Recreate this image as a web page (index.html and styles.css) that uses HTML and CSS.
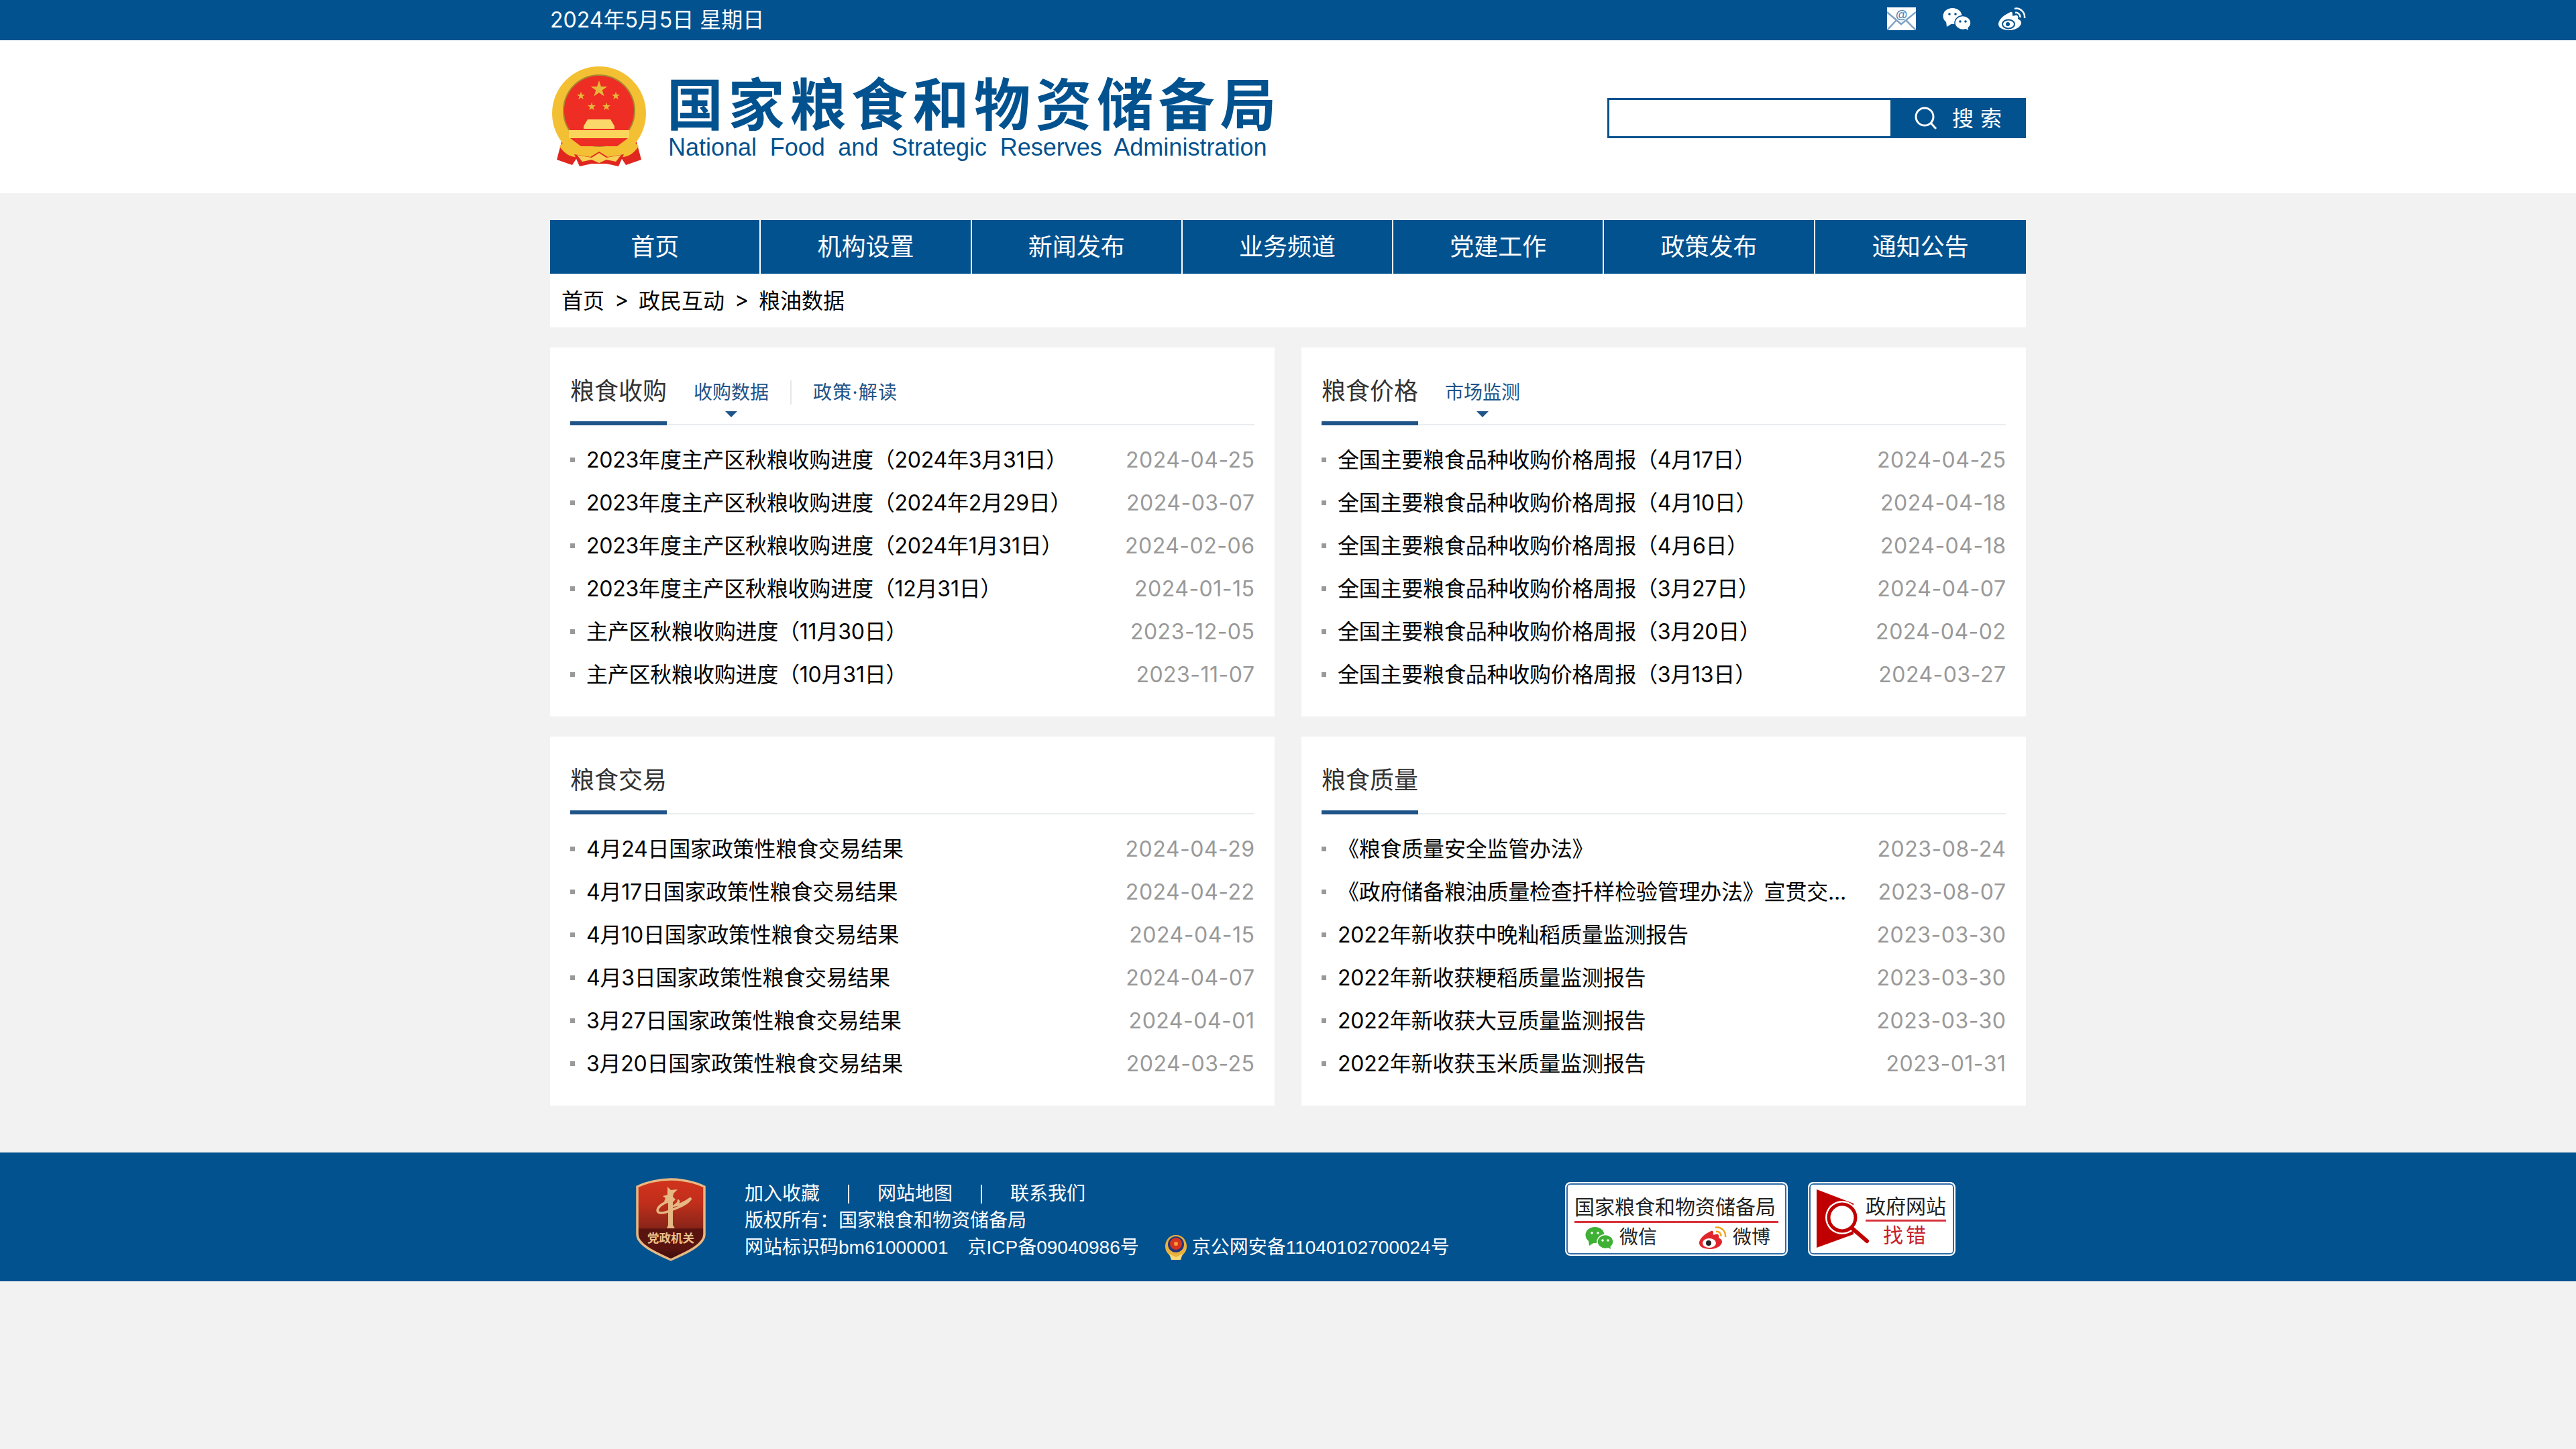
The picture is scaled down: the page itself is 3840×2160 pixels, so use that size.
FILE: index.html
```html
<!DOCTYPE html>
<html lang="zh-CN">
<head>
  <meta charset="UTF-8">
  <meta name="viewport" content="width=device-width, initial-scale=1.0">
  <title>粮油数据 - 国家粮食和物资储备局</title>
  <link rel="stylesheet" href="styles.css">
</head>
<body>
  <!-- Top bar -->
  <div class="topbar">
    <div class="wrap topbar-inner">
      <span class="today">2024年5月5日 星期日</span>
      <div class="top-icons">
        <svg class="icon-mail" viewBox="0 0 43 34">
          <rect width="43" height="34" fill="#fff"/>
          <path d="M0 7 L21 25 L43 7 M0 34 L14 19 M43 34 L28 19" fill="none" stroke="#7fa3c6" stroke-width="2.5"/>
          <circle cx="21.500" cy="11" r="9" fill="#fff"/>
          <text x="21.5" y="17" text-anchor="middle" class="mail-at">@</text>
        </svg>
        <svg class="icon-social" viewBox="0 0 42 34">
          <ellipse cx="14.500" cy="13" rx="14" ry="12" fill="#fff"/>
          <path d="M5 21 L6 29 L14 24 Z" fill="#fff"/>
          <ellipse cx="30" cy="23" rx="12" ry="10.500" fill="#fff" stroke="#02528f" stroke-width="1.500"/>
          <path d="M33 31 L38 34 L37 27 Z" fill="#fff"/>
          <circle cx="10" cy="10" r="1.800" fill="#02528f"/>
          <circle cx="19" cy="10" r="1.800" fill="#02528f"/>
          <circle cx="26" cy="21" r="1.800" fill="#02528f"/>
          <circle cx="34" cy="21" r="1.800" fill="#02528f"/>
        </svg>
        <svg class="icon-social" viewBox="0 0 42 34">
          <path d="M17 8 C8 12 1 19 1 25 C1 31 9 34 17 34 C28 34 35 28 35 23 C35 19 31 18 30 17 C31 14 30 11 26 12 C22 13 21 13 22 10 C22 6 20 6 17 8 Z" fill="#fff"/>
          <ellipse cx="16" cy="25" rx="9" ry="6.5" fill="none" stroke="#02528f" stroke-width="2"/>
          <circle cx="15" cy="25" r="3" fill="#02528f"/>
          <path d="M25 2 C33 0 41 7 40 16 M26 8 C30 7 34 11 33.500 15" fill="none" stroke="#fff" stroke-width="2.500"/>
        </svg>
      </div>
    </div>
  </div>

  <!-- Logo and search -->
  <header class="header">
    <div class="wrap header-inner">
      <div class="logo">
        <svg class="emblem" viewBox="0 0 144 152">
          <defs>
            <polygon id="star" points="0,-1 .225,-.309 .951,-.309 .363,.118 .588,.809 0,.382 -.588,.809 -.363,.118 -.951,-.309 -.225,-.309"/>
          </defs>
          <path d="M18 110 L10 140 L33 148 L48 125 Z M128 110 L136 140 L113 148 L98 125 Z" fill="#e0261f"/>
          <circle cx="73" cy="71" r="70" fill="#f4c033"/>
          <circle cx="73" cy="67" r="54" fill="#a8862e"/>
          <circle cx="73" cy="67" r="52" fill="#ee2d24"/>
          <g fill="#e7b93a">
            <use href="#star" transform="translate(73 35) scale(13)"/>
            <use href="#star" transform="translate(46 45) scale(6.500)"/>
            <use href="#star" transform="translate(98 45) scale(6.500)"/>
            <use href="#star" transform="translate(62 61) scale(6.500)"/>
            <use href="#star" transform="translate(84 61) scale(6.500)"/>
          </g>
          <path d="M56 80 H90 L96 90 V94 H50 V90 Z" fill="#fbd86a"/>
          <rect x="28" y="96" width="90" height="12" fill="#fbd45c"/>
          <path d="M30 108 H116 L100 120 H46 Z" fill="#ee2d24"/>
          <path d="M22 112 C34 134 56 126 73 122 C90 126 112 134 124 112 L132 120 C116 146 90 134 73 134 C56 134 30 146 14 120 Z" fill="#f4c033"/>
          <path d="M36 132 L60 136 L73 128 L86 136 L110 132 L102 150 L84 146 H62 L44 150 Z" fill="#e0261f"/>
          <path d="M40 133 L62 137 L73 130 L84 137 L106 133 L98 143 L84 140 L73 145 L62 140 L48 143 Z" fill="#f7cf55"/>
        </svg>
        <div class="logo-text">
          <div class="logo-cn">国家粮食和物资储备局</div>
          <div class="logo-en">National Food and Strategic Reserves Administration</div>
        </div>
      </div>
      <form class="search">
        <input class="search-input" type="text">
        <button class="search-btn" type="button">
          <svg class="search-icon" viewBox="0 0 34 34">
            <circle cx="15" cy="15" r="13" fill="none" stroke="#fff" stroke-width="3"/>
            <path d="M24 24 L32 33" stroke="#fff" stroke-width="3"/>
          </svg>
          <span class="search-label">搜索</span>
        </button>
      </form>
    </div>
  </header>

  <main class="wrap">
    <nav class="nav">
      <a>首页</a>
      <a>机构设置</a>
      <a>新闻发布</a>
      <a>业务频道</a>
      <a>党建工作</a>
      <a>政策发布</a>
      <a>通知公告</a>
    </nav>
    <div class="crumb">
      <a>首页</a><i>&gt;</i><a>政民互动</a><i>&gt;</i><a>粮油数据</a>
    </div>

    <div class="cards">
      <section class="card">
        <div class="card-head">
          <h3>粮食收购</h3>
          <div class="tabs">
            <a class="tab on">收购数据</a>
            <a class="tab">政策·解读</a>
          </div>
        </div>
        <ul class="list">
          <li><a>2023年度主产区秋粮收购进度（2024年3月31日）</a><span>2024-04-25</span></li>
          <li><a>2023年度主产区秋粮收购进度（2024年2月29日）</a><span>2024-03-07</span></li>
          <li><a>2023年度主产区秋粮收购进度（2024年1月31日）</a><span>2024-02-06</span></li>
          <li><a>2023年度主产区秋粮收购进度（12月31日）</a><span>2024-01-15</span></li>
          <li><a>主产区秋粮收购进度（11月30日）</a><span>2023-12-05</span></li>
          <li><a>主产区秋粮收购进度（10月31日）</a><span>2023-11-07</span></li>
        </ul>
      </section>

      <section class="card">
        <div class="card-head">
          <h3>粮食价格</h3>
          <div class="tabs">
            <a class="tab on">市场监测</a>
          </div>
        </div>
        <ul class="list">
          <li><a>全国主要粮食品种收购价格周报（4月17日）</a><span>2024-04-25</span></li>
          <li><a>全国主要粮食品种收购价格周报（4月10日）</a><span>2024-04-18</span></li>
          <li><a>全国主要粮食品种收购价格周报（4月6日）</a><span>2024-04-18</span></li>
          <li><a>全国主要粮食品种收购价格周报（3月27日）</a><span>2024-04-07</span></li>
          <li><a>全国主要粮食品种收购价格周报（3月20日）</a><span>2024-04-02</span></li>
          <li><a>全国主要粮食品种收购价格周报（3月13日）</a><span>2024-03-27</span></li>
        </ul>
      </section>

      <section class="card">
        <div class="card-head">
          <h3>粮食交易</h3>
        </div>
        <ul class="list">
          <li><a>4月24日国家政策性粮食交易结果</a><span>2024-04-29</span></li>
          <li><a>4月17日国家政策性粮食交易结果</a><span>2024-04-22</span></li>
          <li><a>4月10日国家政策性粮食交易结果</a><span>2024-04-15</span></li>
          <li><a>4月3日国家政策性粮食交易结果</a><span>2024-04-07</span></li>
          <li><a>3月27日国家政策性粮食交易结果</a><span>2024-04-01</span></li>
          <li><a>3月20日国家政策性粮食交易结果</a><span>2024-03-25</span></li>
        </ul>
      </section>

      <section class="card">
        <div class="card-head">
          <h3>粮食质量</h3>
        </div>
        <ul class="list">
          <li><a>《粮食质量安全监管办法》</a><span>2023-08-24</span></li>
          <li><a>《政府储备粮油质量检查扦样检验管理办法》宣贯交...</a><span>2023-08-07</span></li>
          <li><a>2022年新收获中晚籼稻质量监测报告</a><span>2023-03-30</span></li>
          <li><a>2022年新收获粳稻质量监测报告</a><span>2023-03-30</span></li>
          <li><a>2022年新收获大豆质量监测报告</a><span>2023-03-30</span></li>
          <li><a>2022年新收获玉米质量监测报告</a><span>2023-01-31</span></li>
        </ul>
      </section>
    </div>
  </main>

  <!-- Footer -->
  <footer class="footer">
    <div class="wrap footer-inner">
      <svg class="shield" viewBox="0 0 104 124">
        <defs>
          <linearGradient id="shieldFill" x1="0" y1="0" x2="0" y2="1">
            <stop offset="0" stop-color="#d2331c"/>
            <stop offset=".3" stop-color="#c02e1b"/>
            <stop offset=".45" stop-color="#a32a1a"/>
            <stop offset=".6" stop-color="#8a2519"/>
            <stop offset=".62" stop-color="#5a1410"/>
            <stop offset=".85" stop-color="#5a1410"/>
            <stop offset="1" stop-color="#3d0d08"/>
          </linearGradient>
        </defs>
        <path d="M52 2 C68 2 88 6 102 13 V84 C102 100 74 112 52 122 C30 112 2 100 2 84 V13 C16 6 36 2 52 2 Z" fill="url(#shieldFill)" stroke="#e6b883" stroke-width="3.500"/>
        <path d="M47 13 L52 18 L62 17 L56 23 L55 28 L59 32 L55 36 V70 L58 75 H46 L48 70 V36 L42 35 L44 30 L40 27 L47 25 Z" fill="#e6b883"/>
        <path d="M50 34 C42 37 33 42 32 48 C32 54 42 53 52 48 C62 44 76 40 82 30 C74 36 66 40 58 41 C62 38 66 35 62 33" fill="none" stroke="#e6b883" stroke-width="3.500"/>
        <text x="52" y="96" text-anchor="middle" class="shield-text">党政机关</text>
      </svg>
      <div class="foot-text">
        <div class="foot-links"><a>加入收藏</a><i></i><a>网站地图</a><i></i><a>联系我们</a></div>
        <div>版权所有：国家粮食和物资储备局</div>
        <div class="foot-record">
          <span class="record-site">网站标识码bm61000001</span>
          <span class="record-icp">京ICP备09040986号</span>
          <svg class="police" viewBox="0 0 36 40">
            <path d="M18 1 C28 1 34 9 34 18 C34 27 28 30 26 33 C22 39 14 39 10 33 C8 30 2 27 2 18 C2 9 8 1 18 1 Z" fill="#e8b23c"/>
            <circle cx="18" cy="15" r="12" fill="#27357c"/>
            <circle cx="18" cy="14" r="9" fill="#d8341c"/>
            <circle cx="18" cy="14" r="3" fill="#f0a040"/>
            <path d="M8 29 L18 34 L28 29 L25 38 H11 Z" fill="#f6d878"/>
          </svg>
          <span>京公网安备11040102700024号</span>
        </div>
      </div>
      <div class="badges">
        <div class="badge badge-wide">
          <div class="badge-title">国家粮食和物资储备局</div>
          <div class="badge-row">
            <svg class="badge-icon" viewBox="0 0 42 34">
              <ellipse cx="14.500" cy="13" rx="14" ry="12" fill="#3eb135"/>
              <path d="M5 21 L6 29 L14 24 Z" fill="#3eb135"/>
              <ellipse cx="30" cy="23" rx="12" ry="10.500" fill="#3eb135" stroke="#fff" stroke-width="1.500"/>
              <path d="M33 31 L38 34 L37 27 Z" fill="#3eb135"/>
              <circle cx="10" cy="10" r="1.800" fill="#fff"/>
              <circle cx="19" cy="10" r="1.800" fill="#fff"/>
              <circle cx="26" cy="21" r="1.800" fill="#fff"/>
              <circle cx="34" cy="21" r="1.800" fill="#fff"/>
            </svg>
            <span class="badge-label">微信</span>
            <svg class="badge-icon badge-weibo" viewBox="0 0 42 34">
              <path d="M17 8 C8 12 1 19 1 25 C1 31 9 34 17 34 C28 34 35 28 35 23 C35 19 31 18 30 17 C31 14 30 11 26 12 C22 13 21 13 22 10 C22 6 20 6 17 8 Z" fill="#e0262c"/>
              <ellipse cx="16" cy="25" rx="10" ry="7" fill="#fff"/>
              <circle cx="15" cy="25" r="4" fill="#222"/>
              <path d="M25 2 C33 0 41 7 40 16 M26 8 C30 7 34 11 33.500 15" fill="none" stroke="#f2a31c" stroke-width="2.500"/>
            </svg>
            <span class="badge-label">微博</span>
          </div>
        </div>
        <div class="badge badge-find">
          <svg class="find-icon" viewBox="0 0 80 90">
            <path d="M0 0 L55 21 V67 L0 87 Z" fill="#c00000"/>
            <circle cx="38" cy="42" r="25" fill="#fff"/>
            <circle cx="38" cy="42" r="20" fill="#fff" stroke="#c00000" stroke-width="5"/>
            <path d="M53 58 L75 77" stroke="#c00000" stroke-width="6" stroke-linecap="round"/>
          </svg>
          <div class="find-text">
            <div class="find-title">政府网站</div>
            <div class="find-label">找错</div>
          </div>
        </div>
      </div>
    </div>
  </footer>
</body>
</html>
```

FILE: styles.css
```css
/* Base */
body {
  margin: 0;
  background-color: #f2f2f2;
  color: #000;
  font-family: Inter, "Noto Sans CJK SC", "Noto Sans", sans-serif;
  font-size: 32px;
}
h3, ul {
  margin: 0;
  padding: 0;
}
i {
  font-style: normal;
}
.wrap {
  width: 2200px;
  margin: 0 auto;
}

/* Top bar */
.topbar {
  height: 60px;
  background-color: #02528f;
  color: #fff;
}
.topbar-inner {
  display: flex;
  justify-content: space-between;
  align-items: center;
  height: 60px;
}
.today {
  line-height: 60px;
}
.top-icons {
  display: flex;
  gap: 40px;
  margin-top: -4px;
}
.icon-mail {
  width: 43px;
  height: 34px;
}
.icon-social {
  width: 42px;
  height: 34px;
}
.mail-at {
  fill: #4c82b4;
  font-family: "Liberation Sans", sans-serif;
  font-size: 18px;
  font-weight: bold;
}

/* Header */
.header {
  height: 228px;
  background-color: #fff;
}
.header-inner {
  display: flex;
  justify-content: space-between;
  align-items: center;
  height: 228px;
}
.logo {
  display: flex;
  align-items: flex-start;
}
.emblem {
  width: 144px;
  height: 152px;
}
.logo-text {
  margin: 14px 0 0 30px;
  color: #02528f;
}
.logo-cn {
  font-size: 84px;
  font-weight: 700;
  line-height: 90px;
  letter-spacing: 7.6px;
  white-space: nowrap;
}
.logo-en {
  margin: -2px 0 0 2px;
  font-family: "Liberation Sans", sans-serif;
  font-size: 36px;
  line-height: 40px;
  word-spacing: 9.6px;
  white-space: nowrap;
}
.search {
  display: flex;
  height: 60px;
  margin-top: 4px;
}
.search-input {
  box-sizing: border-box;
  width: 422px;
  height: 60px;
  margin: 0;
  padding: 0 10px;
  border: 3px solid #02528f;
  border-right: none;
  background: #fff;
  outline: none;
}
.search-btn {
  display: flex;
  align-items: center;
  width: 202px;
  height: 60px;
  margin: 0;
  padding: 0 0 0 36px;
  border: none;
  background-color: #02528f;
  color: #fff;
  font-family: inherit;
  font-size: 32px;
  letter-spacing: 10px;
}
.search-icon {
  width: 34px;
  height: 34px;
  margin-right: 22px;
}
.search-label {
  margin-bottom: 4px;
}

/* Nav */
.nav {
  display: grid;
  grid-template-columns: repeat(7, 1fr);
  height: 80px;
  margin-top: 40px;
  background-color: #02528f;
}
.nav a {
  border-right: 2px solid #fff;
  color: #fff;
  font-size: 36px;
  line-height: 80px;
  text-align: center;
}
.nav a:last-child {
  border-right: none;
}
.crumb {
  display: flex;
  align-items: center;
  box-sizing: border-box;
  height: 80px;
  padding: 0 0 4px 17px;
  background-color: #fff;
}
.crumb i {
  width: 51px;
  text-align: center;
}

/* Cards */
.cards {
  display: grid;
  grid-template-columns: 1080px 1080px;
  gap: 30px 40px;
  margin-top: 30px;
}
.card {
  box-sizing: border-box;
  height: 550px;
  padding: 0 30px;
  background-color: #fff;
}
.card-head {
  display: flex;
  align-items: flex-start;
  box-sizing: border-box;
  height: 116px;
  border-bottom: 2px solid #e9edf0;
}
.card-head h3 {
  box-sizing: border-box;
  height: 116px;
  padding-top: 39px;
  border-bottom: 6px solid #1f5488;
  color: #333;
  font-size: 36px;
  font-weight: 400;
  line-height: 52px;
}
.tabs {
  display: flex;
  margin: 49px 0 0 40px;
}
.tab {
  position: relative;
  color: #1f5488;
  font-size: 28px;
  line-height: 36px;
}
.tab + .tab {
  margin-left: 32px;
  padding-left: 32px;
  border-left: 2px solid #e3e7ea;
  letter-spacing: 1.2px;
}
.tab.on::after {
  content: "";
  position: absolute;
  left: 50%;
  bottom: -19px;
  margin-left: -9px;
  border-width: 9px 9px 0;
  border-style: solid;
  border-color: #1f5488 transparent transparent;
}
.list {
  margin-top: 19px;
  list-style: none;
}
.list li {
  display: flex;
  justify-content: space-between;
  align-items: center;
  position: relative;
  height: 64px;
  padding-left: 24px;
}
.list li::before {
  content: "";
  position: absolute;
  left: 0;
  top: 29px;
  width: 7px;
  height: 7px;
  background-color: #999;
}
.list a {
  margin-bottom: 4px;
  letter-spacing: -0.22px;
}
.list span {
  color: #999;
  letter-spacing: 0.5px;
  margin-right: -0.5px;
}

/* Footer */
.footer {
  height: 192px;
  margin-top: 70px;
  background-color: #02528f;
  color: #fff;
  font-family: "Liberation Sans", "Noto Sans CJK SC", sans-serif;
  font-size: 28px;
}
.footer-inner {
  display: flex;
  align-items: flex-start;
  box-sizing: border-box;
  padding: 38px 105px 0 128px;
}
.shield {
  flex: none;
  width: 104px;
  height: 124px;
}
.shield-text {
  fill: #e9c08a;
  font-size: 17.5px;
  font-weight: 700;
}
.foot-text {
  margin: 4px 0 0 58px;
  line-height: 40px;
  white-space: nowrap;
}
.foot-links {
  display: flex;
  align-items: center;
}
.foot-links i {
  width: 2px;
  height: 28px;
  margin: 0 42px;
  background-color: #fff;
}
.foot-record {
  display: flex;
  align-items: center;
}
.record-site {
  margin-right: 29px;
}
.record-icp {
  margin-right: 37px;
}
.police {
  width: 36px;
  height: 40px;
  margin-right: 6px;
}
.badges {
  display: flex;
  gap: 30px;
  margin: 6px 0 0 auto;
}
.badge {
  box-sizing: border-box;
  height: 110px;
  border: 2px solid #fff;
  border-radius: 8px;
  box-shadow: inset 0 0 0 2px #2f6ba8;
  background-color: #fff;
  color: #222;
  line-height: 1;
}
.badge-wide {
  width: 332px;
  padding: 21px 12px 0;
}
.badge-title {
  padding-bottom: 5px;
  border-bottom: 3px solid #d8323c;
  font-size: 30px;
  white-space: nowrap;
}
.badge-row {
  display: flex;
  align-items: center;
  margin-top: 5px;
  padding-left: 16px;
}
.badge-icon {
  width: 42px;
  height: 34px;
}
.badge-weibo {
  margin-left: 62px;
}
.badge-label {
  margin-left: 9px;
  font-size: 28px;
}
.badge-find {
  display: flex;
  width: 220px;
  padding: 9px 0 0 11px;
}
.find-icon {
  flex: none;
  width: 80px;
  height: 90px;
}
.find-text {
  margin: 11px 0 0 -7px;
  font-size: 30px;
  text-align: center;
}
.find-title {
  width: 120px;
  padding-bottom: 4px;
  border-bottom: 3px solid #d8323c;
}
.find-label {
  margin-top: 6px;
  color: #c6202b;
  letter-spacing: 4px;
}
```
